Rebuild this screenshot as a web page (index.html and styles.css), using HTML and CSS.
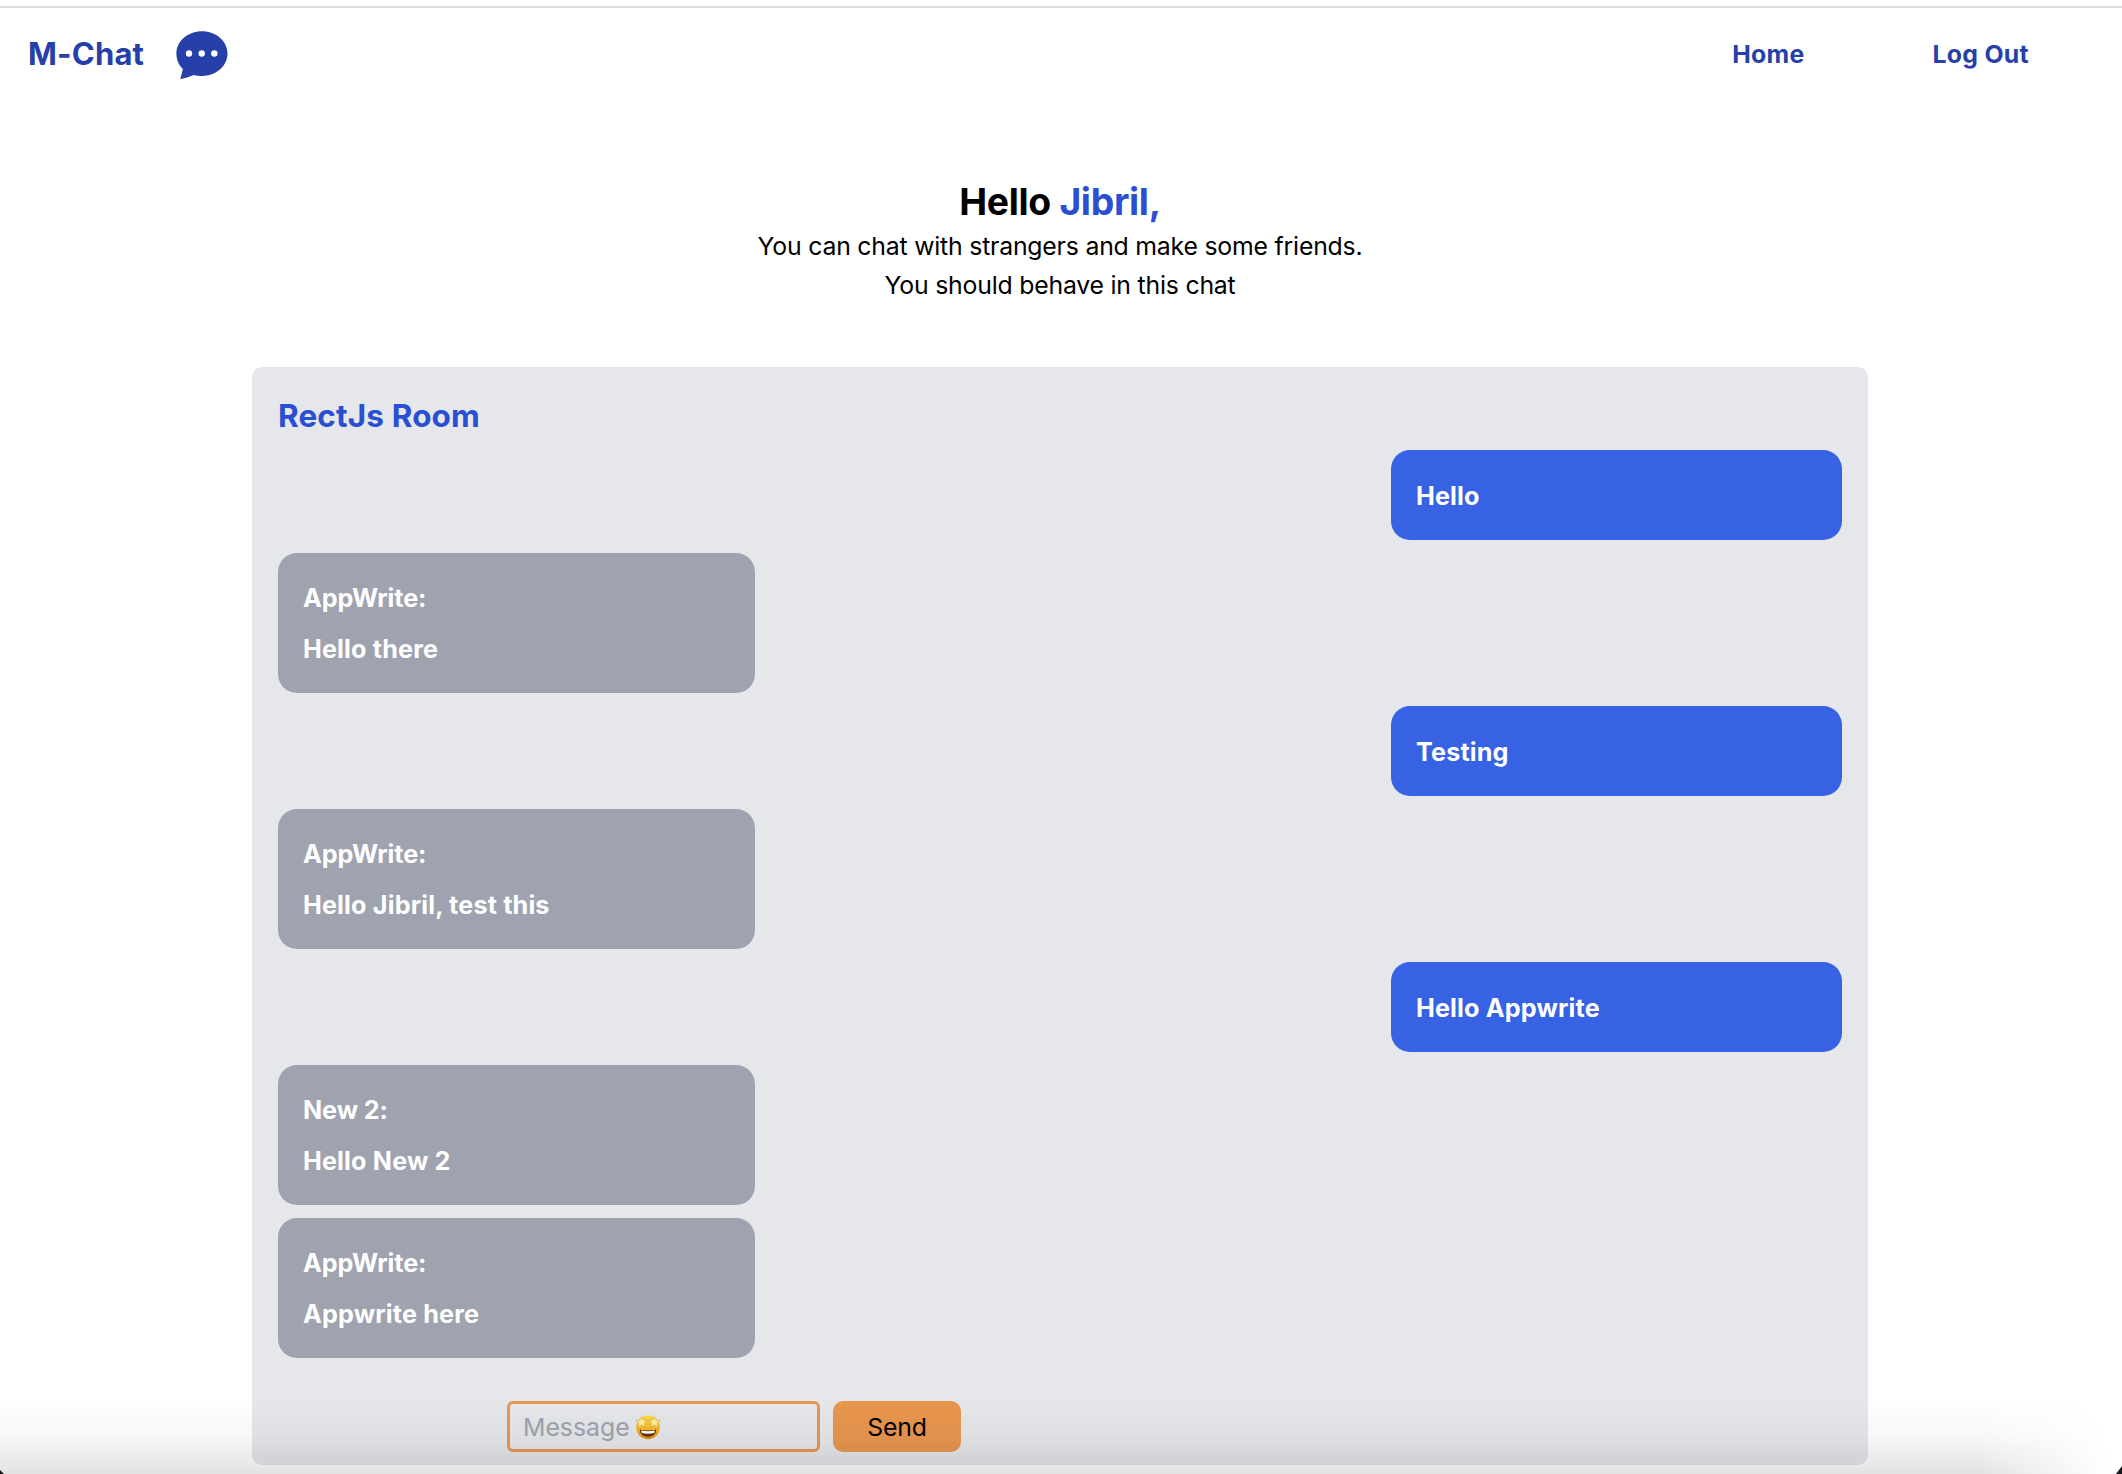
FILE: index.html
```
<!DOCTYPE html>
<html lang="en">
<head>
<meta charset="utf-8">
<title>M-Chat</title>
<link rel="stylesheet" href="styles.css">
</head>
<body>
<header class="navbar">
  <div class="brand">
    <span class="brand-name">M-Chat</span>
    <svg class="brand-icon" viewBox="0 0 52 49" aria-hidden="true">
      <path fill="currentColor" d="M26 .2C40 .2 51.500 10 51.500 22.600S40 45 26 45c-3 0-5.600-.3-8.200-1-4.500 1.800-9 3.200-13.500 4.200.8-3 1.800-6.500 2.500-10.200C2.600 34 .4 28.600.4 22.600.4 10 12 .2 26 .2Z"/>
      <g fill="#fff"><circle cx="13" cy="22.500" r="3.200"/><circle cx="25.700" cy="22.500" r="3.200"/><circle cx="38.300" cy="22.500" r="3.200"/></g>
    </svg>
  </div>
  <nav class="links">
    <a class="link">Home</a>
    <a class="link">Log Out</a>
  </nav>
</header>
<main>
  <section class="intro">
    <h1 class="greeting">Hello <span class="user">Jibril,</span></h1>
    <p class="line">You can chat with strangers and make some friends.</p>
    <p class="line">You should behave in this chat</p>
  </section>
  <section class="room">
    <h2 class="room-title">RectJs Room</h2>
    <div class="messages">
      <div class="msg mine"><p>Hello</p></div>
      <div class="msg other"><p class="author">AppWrite:</p><p>Hello there</p></div>
      <div class="msg mine"><p>Testing</p></div>
      <div class="msg other"><p class="author">AppWrite:</p><p>Hello Jibril, test this</p></div>
      <div class="msg mine"><p>Hello Appwrite</p></div>
      <div class="msg other"><p class="author">New 2:</p><p>Hello New 2</p></div>
      <div class="msg other"><p class="author">AppWrite:</p><p>Appwrite here</p></div>
    </div>
    <form class="composer">
      <div class="field"><span>Message</span>
        <svg class="emoji" viewBox="0 0 26 25" aria-hidden="true">
          <defs><linearGradient id="face" x1="0" y1="0" x2="0" y2="1"><stop offset="0" stop-color="#fbe04a"/><stop offset=".6" stop-color="#f5b52a"/><stop offset="1" stop-color="#e08a14"/></linearGradient></defs>
          <circle cx="13" cy="12.300" r="11.900" fill="url(#face)"/>
          <path fill="#5e3608" d="M4.800 14.500q8.200 2 16.400 0c0 4.500-3.500 7.300-8.200 7.300s-8.200-2.800-8.200-7.300Z"/>
          <path fill="#fff" d="M6 15.500q7 1.600 14 0l-.8 2.500q-6.200 1.500-12.400 0Z"/>
          <path fill="#fff0a0" stroke="#c9891c" stroke-width=".4" d="m6.800 1.500 1.400 3.400 4 .5-2.800 2.800.8 4-3.600-1.900-3.700 1.700.8-3.900L.5 5.600l4.300-.5ZM19.200 1.500l-1.400 3.400-4 .5 2.800 2.800-.8 4 3.600-1.900 3.700 1.700-.8-3.900 3.200-2.500-4.300-.5Z"/>
        </svg>
      </div>
      <button class="send" type="button">Send</button>
    </form>
  </section>
</main>
<div class="shade"></div>
</body>
</html>
```
FILE: styles.css
```
* { box-sizing: border-box; }
html { height: 100%; overflow: hidden; background: #17171b; }
body {
  margin: 0;
  height: 1474px;
  overflow: hidden;
  position: relative;
  padding-top: 6px;
  background: #fff;
  clip-path: polygon(0 0, 100% 0, 100% calc(100% - 8px), calc(100% - 6px) 100%, 4px 100%, 0 calc(100% - 4px));
  font-family: Inter, "Liberation Sans", sans-serif;
  font-size: 24.800px;
  line-height: 38.400px;
  color: #000;
}
h1, h2, p { margin: 0; }
.navbar {
  display: flex;
  justify-content: space-between;
  height: 95px;
  padding: 0 93px 0 28px;
  border-top: 2px solid #dcdcdc;
  color: #263fa9;
}
.brand { display: flex; padding-top: 23px; }
.brand-name { width: 148px; font-size: 31px; font-weight: 700; line-height: 45px; letter-spacing: .2px; }
.brand-icon { width: 52px; height: 49px; }
.links { display: flex; gap: 128px; padding-top: 27px; }
.link { font-weight: 700; letter-spacing: .3px; }
.intro { display: flex; flex-direction: column; align-items: center; padding: 78px 2px 0 0; height: 266px; }
.greeting { margin-bottom: 2px; font-size: 37.300px; font-weight: 700; line-height: 46px; letter-spacing: -.3px; }
.user { color: #2b4fd2; }
.line { line-height: 39px; letter-spacing: -.2px; }
.room {
  width: 1616px;
  height: 1098px;
  margin-left: 252px;
  padding: 26px 26px 0;
  border-radius: 10px;
  background: #e5e7eb;
}
.room-title { height: 57px; font-size: 31.500px; font-weight: 700; line-height: 46px; letter-spacing: .15px; color: #2b4fd2; }
.messages { display: flex; flex-direction: column; gap: 13px; }
.msg {
  display: flex;
  flex-direction: column;
  gap: 13px;
  padding: 26px 25px;
  border-radius: 19px;
  color: #fff;
  font-size: 25.200px;
  font-weight: 700;
  letter-spacing: .15px;
}
.mine { align-self: flex-end; width: 451px; height: 90px; padding-top: 27px; background: #3662e3; }
.other { align-self: flex-start; width: 477px; height: 140px; background: #9ea3af; }
.author { letter-spacing: -.1px; }
.composer { display: flex; gap: 13px; padding: 43px 0 0 229px; }
.field {
  display: flex;
  align-items: center;
  gap: 5px;
  width: 313px;
  height: 51px;
  padding: 1px 0 0 13px;
  border: 3px solid #e9964f;
  border-radius: 6px;
  color: #9ea3af;
}
.emoji { width: 26px; height: 25px; }
.send {
  width: 128px;
  height: 51px;
  padding: 1px 0 0;
  border: 0;
  border-radius: 10px;
  background: #e9964f;
  font: inherit;
  letter-spacing: -.2px;
  color: #000;
}
.shade {
  position: absolute;
  inset: auto 0 0 0;
  height: 76px;
  background: linear-gradient(to bottom, rgba(0,0,0,0), rgba(0,0,0,.03) 50%, rgba(0,0,0,.11));
  mask-image: linear-gradient(to right, #000 1980px, transparent 2110px);
}
```
